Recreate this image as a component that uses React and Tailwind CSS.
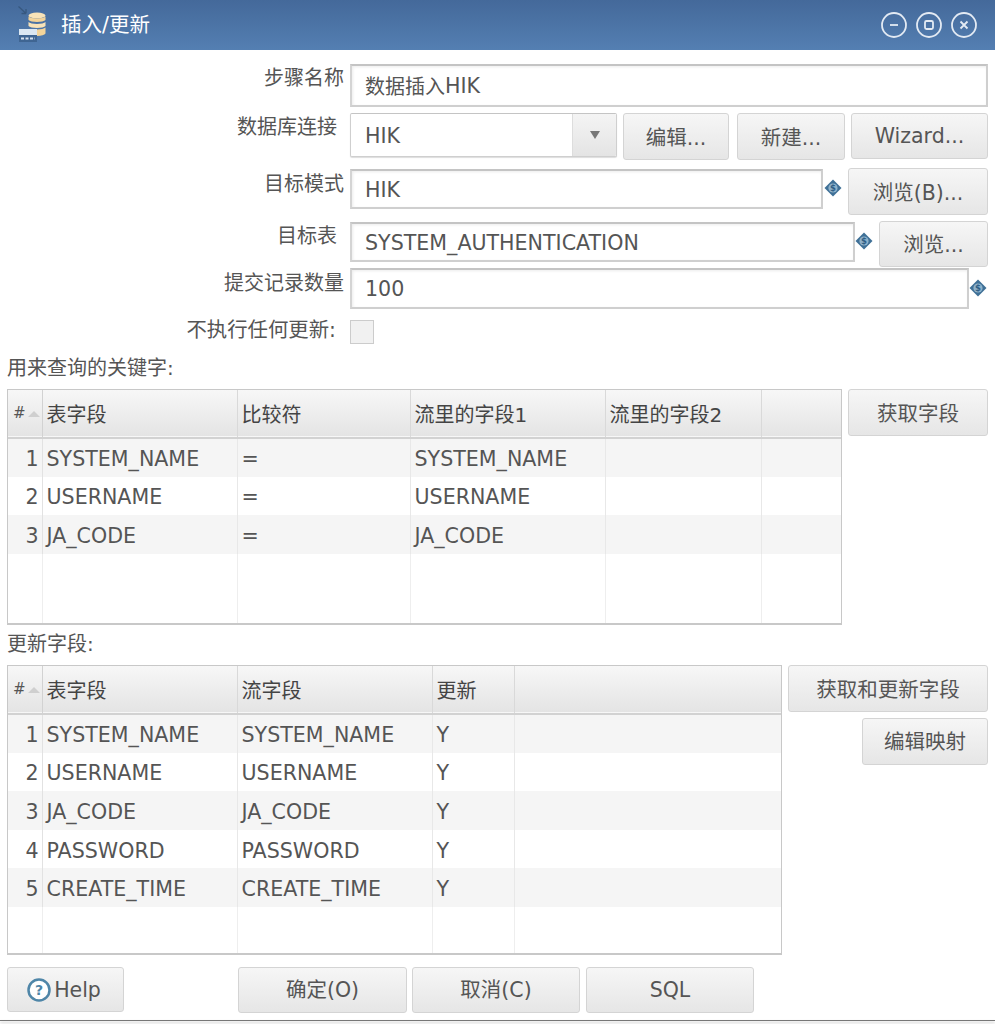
const font = "font-['DejaVu_Sans','Noto_Sans_CJK_SC',sans-serif]";

function Btn({ className = "", children }) {
  return (
    <button className={`flex items-center justify-center rounded-[3px] border border-[#d4d4d4] bg-gradient-to-b from-[#f6f6f6] to-[#e6e6e6] text-[20.5px] text-[#555] shrink-0 ${className}`}>
      {children}
    </button>
  );
}

function Field({ className = "", children }) {
  return (
    <div className={`flex items-center border-2 border-[#cfcfcf] border-t-[#c4c4c4] border-l-[#d4d4d4] bg-white pl-[13px] pt-[2px] text-[20.6px] text-[#555] shadow-[inset_1px_1px_3px_#ececec] shrink-0 ${className}`}>
      {children}
    </div>
  );
}

function VarIcon() {
  return (
    <svg width="18" height="18" viewBox="0 0 18 18" className="shrink-0">
      <path d="M9 0.5 17.5 9 9 17.5 0.5 9Z" fill="#3f7097" />
      <circle cx="9" cy="9" r="4.6" fill="#8fb2cb" />
      <text x="9" y="12" fontSize="8.5" fontWeight="700" textAnchor="middle" fill="#2f5f86" fontFamily="DejaVu Sans">$</text>
    </svg>
  );
}

function Label({ className = "w-[344px]", children }) {
  return <div className={`text-right text-[20px] leading-[26px] text-[#555] shrink-0 ${className}`}>{children}</div>;
}

function Grid({ cols, headers, rows, total, heightClass, widthClass }) {
  const fill = Array.from({ length: total - rows.length });
  return (
    <div className={`border border-[#c8c8c8] border-b-2 shrink-0 overflow-hidden ${widthClass} ${heightClass}`}>
      <table className="table-fixed border-collapse text-[20.6px] text-[#555] w-full">
        <colgroup>
          <col className="w-[34px]" />
          {cols.map((c) => (
            <col key={c} className={c} />
          ))}
        </colgroup>
        <thead>
          <tr className="h-[48px] border-b-2 border-[#d2d2d2] bg-gradient-to-b from-[#f7f7f7] to-[#e4e4e4]">
            <th className="border-r border-[#d2d2d2] p-0 font-normal">
              <div className="flex items-center pl-[5px] text-[15px] text-[#555]">
                #
                <span className="ml-[2px] h-0 w-0 border-x-[6px] border-b-[6px] border-x-transparent border-b-[#cfcfcf]" />
              </div>
            </th>
            {headers.map((h, i) => (
              <th key={i} className="border-r border-[#d9d9d9] pl-[4px] pt-[3px] text-left text-[20px] font-normal text-[#444] last:border-r-0">{h}</th>
            ))}
          </tr>
        </thead>
        <tbody>
          {rows.map((r, i) => (
            <tr key={i} className={`h-[38.6px] ${i % 2 === 0 ? "bg-[#f5f5f5]" : "bg-white"}`}>
              <td className="border-r border-[#e2e2e2] pr-[3px] pt-[4px] text-right">{i + 1}</td>
              {headers.map((h, j) => (
                <td key={j} className="border-r border-[#e8e8e8] pl-[4px] pt-[4px] whitespace-nowrap last:border-r-0">{r[j]}</td>
              ))}
            </tr>
          ))}
          {fill.map((_, i) => (
            <tr key={i} className="h-[38.6px]">
              <td className="border-r border-[#eeeeee]" />
              {headers.map((h, j) => (
                <td key={j} className="border-r border-[#eeeeee] last:border-r-0" />
              ))}
            </tr>
          ))}
        </tbody>
      </table>
    </div>
  );
}

function WinBtn({ children }) {
  return (
    <svg width="26" height="26" viewBox="0 0 26 26" fill="none" stroke="#e3eaf3" strokeWidth="1.8">
      <circle cx="13" cy="13" r="12" />
      {children}
    </svg>
  );
}

export default function App() {
  return (
    <div className={`${font} h-[1024px] w-[995px] overflow-hidden bg-white`}>
      <div className="flex h-[50px] items-center bg-gradient-to-b from-[#44699a] to-[#547fb2] pl-[17px] pr-[18px]">
        <svg width="30" height="38" viewBox="0 0 30 38" className="shrink-0">
          <path d="M1.500 0.500 9 7.500M9 7.500V3M9 7.500H4.500" stroke="#37587f" strokeWidth="1.300" fill="none" />
          <ellipse cx="20" cy="9.500" rx="8.500" ry="3" fill="#f8e3b8" />
          <path d="M11.500 10.500c2 2.500 15 2.500 17 0v3.500c-2 2.500-15 2.500-17 0Z" fill="#f3d49a" />
          <path d="M11.500 16c2 2.500 15 2.500 17 0v4c-2 2.500-15 2.500-17 0Z" fill="#f8e3b8" />
          <path d="M20 23.500c4 0 7-0.800 8.500-2v6c-1 1.500-4 2.500-8.500 2.500Z" fill="#f3d49a" />
          <rect x="2" y="23" width="18" height="6" fill="#dbe7f2" />
          <rect x="2" y="29" width="18" height="7" fill="#3f6592" />
          <path d="M4 32.500h14" stroke="#d5e0ec" strokeWidth="2" strokeDasharray="3 1.500" />
        </svg>
        <span className="ml-[14px] text-[20.5px] text-white">插入/更新</span>
        <div className="ml-auto flex gap-[9px]">
          <WinBtn><path d="M9 13h8" /></WinBtn>
          <WinBtn><rect x="9" y="9" width="8" height="8" rx="1.500" /></WinBtn>
          <WinBtn><path d="M9.500 9.500l7 7M16.500 9.500l-7 7" /></WinBtn>
        </div>
      </div>

      <div className="flex flex-col pt-[14px]">
        <div className="flex items-center">
          <Label className="-mt-[16px] w-[344px]">步骤名称</Label>
          <Field className="ml-[6px] h-[43px] w-[638px]"><span className="text-[20px]">数据插入</span>HIK</Field>
        </div>

        <div className="mt-[6px] flex items-start">
          <Label className="mt-[1px] w-[344px] pr-[7px]">数据库连接</Label>
          <div className="ml-[6px] flex h-[44px] w-[267px] items-stretch overflow-hidden rounded-[2px] border border-[#cfcfcf] border-t-[#c4c4c4] bg-white pt-0 text-[20.6px] text-[#555] shadow-[0_1px_1px_#ddd] shrink-0">
            <span className="flex flex-1 items-center pl-[14px] pt-[2px]">HIK</span>
            <span className="flex w-[44px] items-center justify-center border-l border-[#dddddd] bg-gradient-to-b from-[#f4f4f4] to-[#e4e4e4]">
              <span className="h-0 w-0 border-x-[5px] border-t-[8px] border-x-transparent border-t-[#777]" />
            </span>
          </div>
          <Btn className="ml-[6px] h-[47px] w-[106px] pt-[3px]">编辑...</Btn>
          <Btn className="ml-[8px] h-[47px] w-[108px] pt-[3px]">新建...</Btn>
          <Btn className="ml-[6px] h-[46px] w-[137px]">Wizard...</Btn>
        </div>

        <div className="mt-[8px] flex items-start">
          <Label className="mt-[3px] w-[344px]">目标模式</Label>
          <Field className="ml-[6px] mt-[1px] h-[40px] w-[473px]">HIK</Field>
          <span className="ml-[1px] mt-[11px]"><VarIcon /></span>
          <Btn className="ml-[6px] h-[47px] w-[140px] pt-[3px]">浏览(B)...</Btn>
        </div>

        <div className="mt-[6px] flex items-start">
          <Label className="mt-[2px] w-[344px] pr-[7px]">目标表</Label>
          <Field className="ml-[6px] mt-[1px] h-[40px] w-[505px]">SYSTEM_AUTHENTICATION</Field>
          <span className="mt-[11px]"><VarIcon /></span>
          <Btn className="ml-[6px] h-[46px] w-[109px] pt-[3px]">浏览...</Btn>
        </div>

        <div className="mt-[1px] flex items-start">
          <Label className="mt-[2px] w-[344px]">提交记录数量</Label>
          <Field className="ml-[6px] h-[41px] w-[619px]">100</Field>
          <span className="mt-[11px]"><VarIcon /></span>
        </div>

        <div className="mt-[11px] flex items-start">
          <Label className="-mt-[3px] w-[336px]"><span className="text-[20.4px]">不执行任何更新:</span></Label>
          <div className="ml-[14px] h-[24px] w-[24px] border border-[#cccccc] bg-[#f1f1f1]" />
        </div>

        <div className="ml-[7px] mt-[11px] h-[26px] text-[20px] leading-[26px] text-[#555]">用来查询的关键字:</div>

        <div className="mt-[8px] flex items-start pl-[7px]">
          <Grid
            widthClass="w-[835px]"
            heightClass="h-[236px]"
            cols={["w-[195px]", "w-[173px]", "w-[195px]", "w-[156px]", "w-auto"]}
            headers={["表字段", "比较符", "流里的字段1", "流里的字段2", ""]}
            rows={[
              ["SYSTEM_NAME", "=", "SYSTEM_NAME", "", ""],
              ["USERNAME", "=", "USERNAME", "", ""],
              ["JA_CODE", "=", "JA_CODE", "", ""],
            ]}
            total={6}
          />
          <Btn className="ml-[6px] h-[47px] w-[140px] pt-[3px]">获取字段</Btn>
        </div>

        <div className="ml-[7px] mt-[6px] h-[26px] text-[20px] leading-[26px] text-[#555]">更新字段:</div>

        <div className="mt-[8px] flex items-start pl-[7px]">
          <Grid
            widthClass="w-[775px]"
            heightClass="h-[290px]"
            cols={["w-[195px]", "w-[195px]", "w-[82px]", "w-auto"]}
            headers={["表字段", "流字段", "更新", ""]}
            rows={[
              ["SYSTEM_NAME", "SYSTEM_NAME", "Y", ""],
              ["USERNAME", "USERNAME", "Y", ""],
              ["JA_CODE", "JA_CODE", "Y", ""],
              ["PASSWORD", "PASSWORD", "Y", ""],
              ["CREATE_TIME", "CREATE_TIME", "Y", ""],
            ]}
            total={7}
          />
          <div className="ml-[6px] flex w-[200px] flex-col items-end gap-[6px]">
            <Btn className="h-[47px] w-[200px] pt-[3px]">获取和更新字段</Btn>
            <Btn className="h-[47px] w-[126px] pt-[1px]">编辑映射</Btn>
          </div>
        </div>

        <div className="mt-[12px] flex items-start pl-[7px]">
          <Btn className="h-[45px] w-[117px] pt-[1px]">
            <svg width="24" height="24" viewBox="0 0 24 24" className="mr-[3px] -ml-[3px]">
              <circle cx="12" cy="12" r="10.500" fill="#fff" stroke="#4f86a8" strokeWidth="2.500" />
              <text x="12" y="17" fontSize="14" fontWeight="700" textAnchor="middle" fill="#4f86a8" fontFamily="DejaVu Sans">?</text>
            </svg>
            Help
          </Btn>
          <Btn className="ml-[114px] h-[46px] w-[169px]">确定(O)</Btn>
          <Btn className="ml-[5px] h-[46px] w-[168px]">取消(C)</Btn>
          <Btn className="ml-[6px] h-[46px] w-[168px]">SQL</Btn>
        </div>

        <div className="mt-[7px] h-[1px] bg-[#777] shadow-[0_2px_3px_#bbb]" />
      </div>
    </div>
  );
}
